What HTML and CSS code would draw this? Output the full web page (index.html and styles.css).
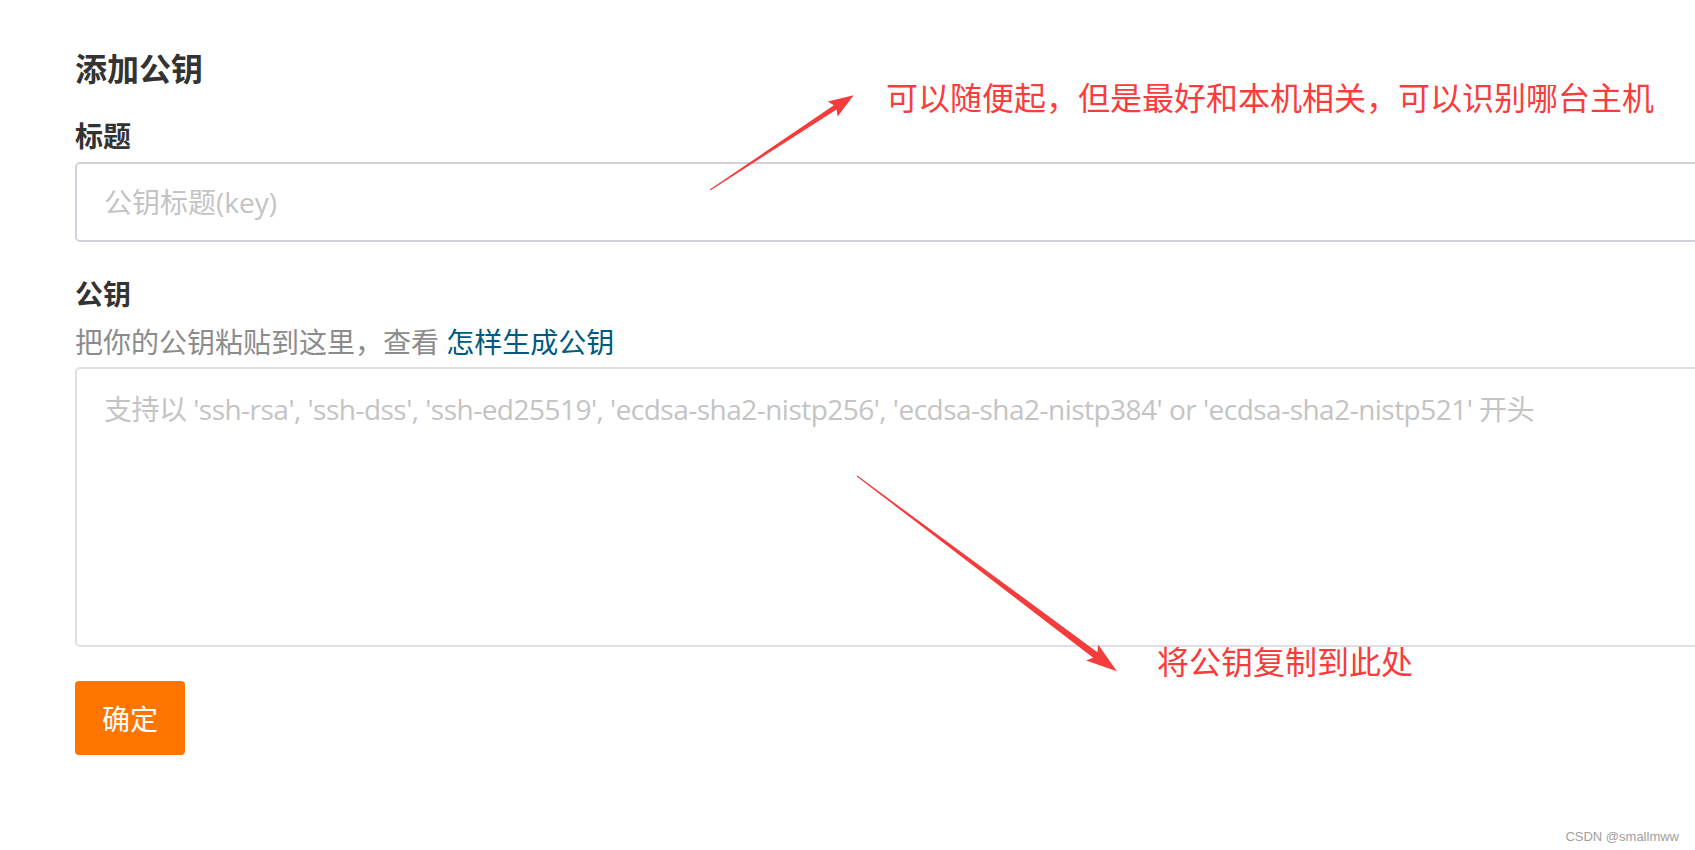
FILE: index.html
```html
<!DOCTYPE html>
<html lang="zh-CN">
<head>
    <meta charset="UTF-8">
    <meta name="viewport" content="width=device-width, initial-scale=1.0">
    <title>添加公钥</title>
    <link rel="stylesheet" href="styles.css">
</head>
<body>
    <div class="page">
        <form class="key-form">
            <h3 class="form-title">添加公钥</h3>
            <div class="field">
                <label for="keyTitle">标题</label>
                <input type="text" id="keyTitle" placeholder="公钥标题(key)" />
            </div>
            <div class="field field-key">
                <label for="keyBody">公钥</label>
                <div class="help">把你的公钥粘贴到这里，查看 <a href="#">怎样生成公钥</a></div>
                <textarea id="keyBody" placeholder="支持以 'ssh-rsa', 'ssh-dss', 'ssh-ed25519', 'ecdsa-sha2-nistp256', 'ecdsa-sha2-nistp384' or 'ecdsa-sha2-nistp521' 开头"></textarea>
            </div>
            <button type="button" class="btn-submit">确定</button>
        </form>

        <!-- 截图上的标注 -->
        <svg class="marks" width="1695" height="850" viewBox="0 0 1695 850">
            <g transform="translate(710 190) rotate(-33.4)">
                <polygon points="0,-0.5 150,-2.5 147,-9 172,0 147,9 150,2.5 0,0.5" />
            </g>
            <g transform="translate(857 476) rotate(36.9)">
                <polygon points="0,-0.5 298,-3.5 294,-10 325,0 294,10 298,3.5 0,0.5" />
            </g>
        </svg>
        <div class="note note-title">可以随便起，但是最好和本机相关，可以识别哪台主机</div>
        <div class="note note-key">将公钥复制到此处</div>
        <div class="watermark">CSDN @smallmww</div>
    </div>
</body>
</html>
```

FILE: styles.css
```css
body {
    margin: 0;
    background: #fff;
    font-family: "Open Sans", "Noto Sans CJK SC", sans-serif;
    overflow: hidden;
}
.page {
    position: relative;
    width: 1695px;
    height: 850px;
    overflow: hidden;
}
.key-form {
    width: 1720px;
    padding: 46px 0 0 75px;
}
.form-title {
    margin: 0 0 26px 0;
    font-size: 32px;
    line-height: 45px;
    font-weight: bold;
    color: #333;
}
.field label {
    display: block;
    font-size: 28px;
    line-height: 39px;
    font-weight: bold;
    color: #333;
    margin-bottom: 6px;
}
.field input {
    display: block;
    box-sizing: border-box;
    width: 100%;
    height: 80px;
    padding: 0 27px;
    font-family: inherit;
    font-size: 28px;
    border: 2px solid #d0d1db;
    border-radius: 5px;
    outline: none;
}
.field-key {
    margin-top: 33px;
}
.field-key label {
    margin-bottom: 9px;
}
.help {
    font-size: 28px;
    line-height: 39px;
    color: #8c8c8c;
    margin-bottom: 5px;
}
.help a {
    color: #005980;
    text-decoration: none;
}
.field textarea {
    display: block;
    box-sizing: border-box;
    width: 100%;
    height: 280px;
    padding: 21px 27px;
    font-family: inherit;
    font-size: 28px;
    line-height: 39px;
    letter-spacing: -0.52px;
    border: 2px solid #dfe0e6;
    border-radius: 5px;
    resize: none;
    outline: none;
}
.field input::placeholder,
.field textarea::placeholder {
    color: #c4c4c4;
}
.btn-submit {
    margin-top: 34px;
    height: 74px;
    padding: 0 27px;
    border: none;
    border-radius: 4px;
    background: #ff7500;
    color: #fff;
    font-family: inherit;
    font-size: 28px;
}
.marks {
    position: absolute;
    left: 0;
    top: 0;
    fill: #f53c3c;
}
.note {
    position: absolute;
    color: #fa3c3c;
    font-family: "Noto Sans CJK SC", sans-serif;
    font-size: 32px;
    line-height: 40px;
    white-space: nowrap;
}
.note-title {
    left: 886px;
    top: 76px;
}
.note-key {
    left: 1157px;
    top: 640px;
}
.watermark {
    position: absolute;
    right: 16px;
    bottom: 6px;
    font-family: "Liberation Sans", Arial, sans-serif;
    font-size: 13px;
    color: #a0a0a0;
}
```
